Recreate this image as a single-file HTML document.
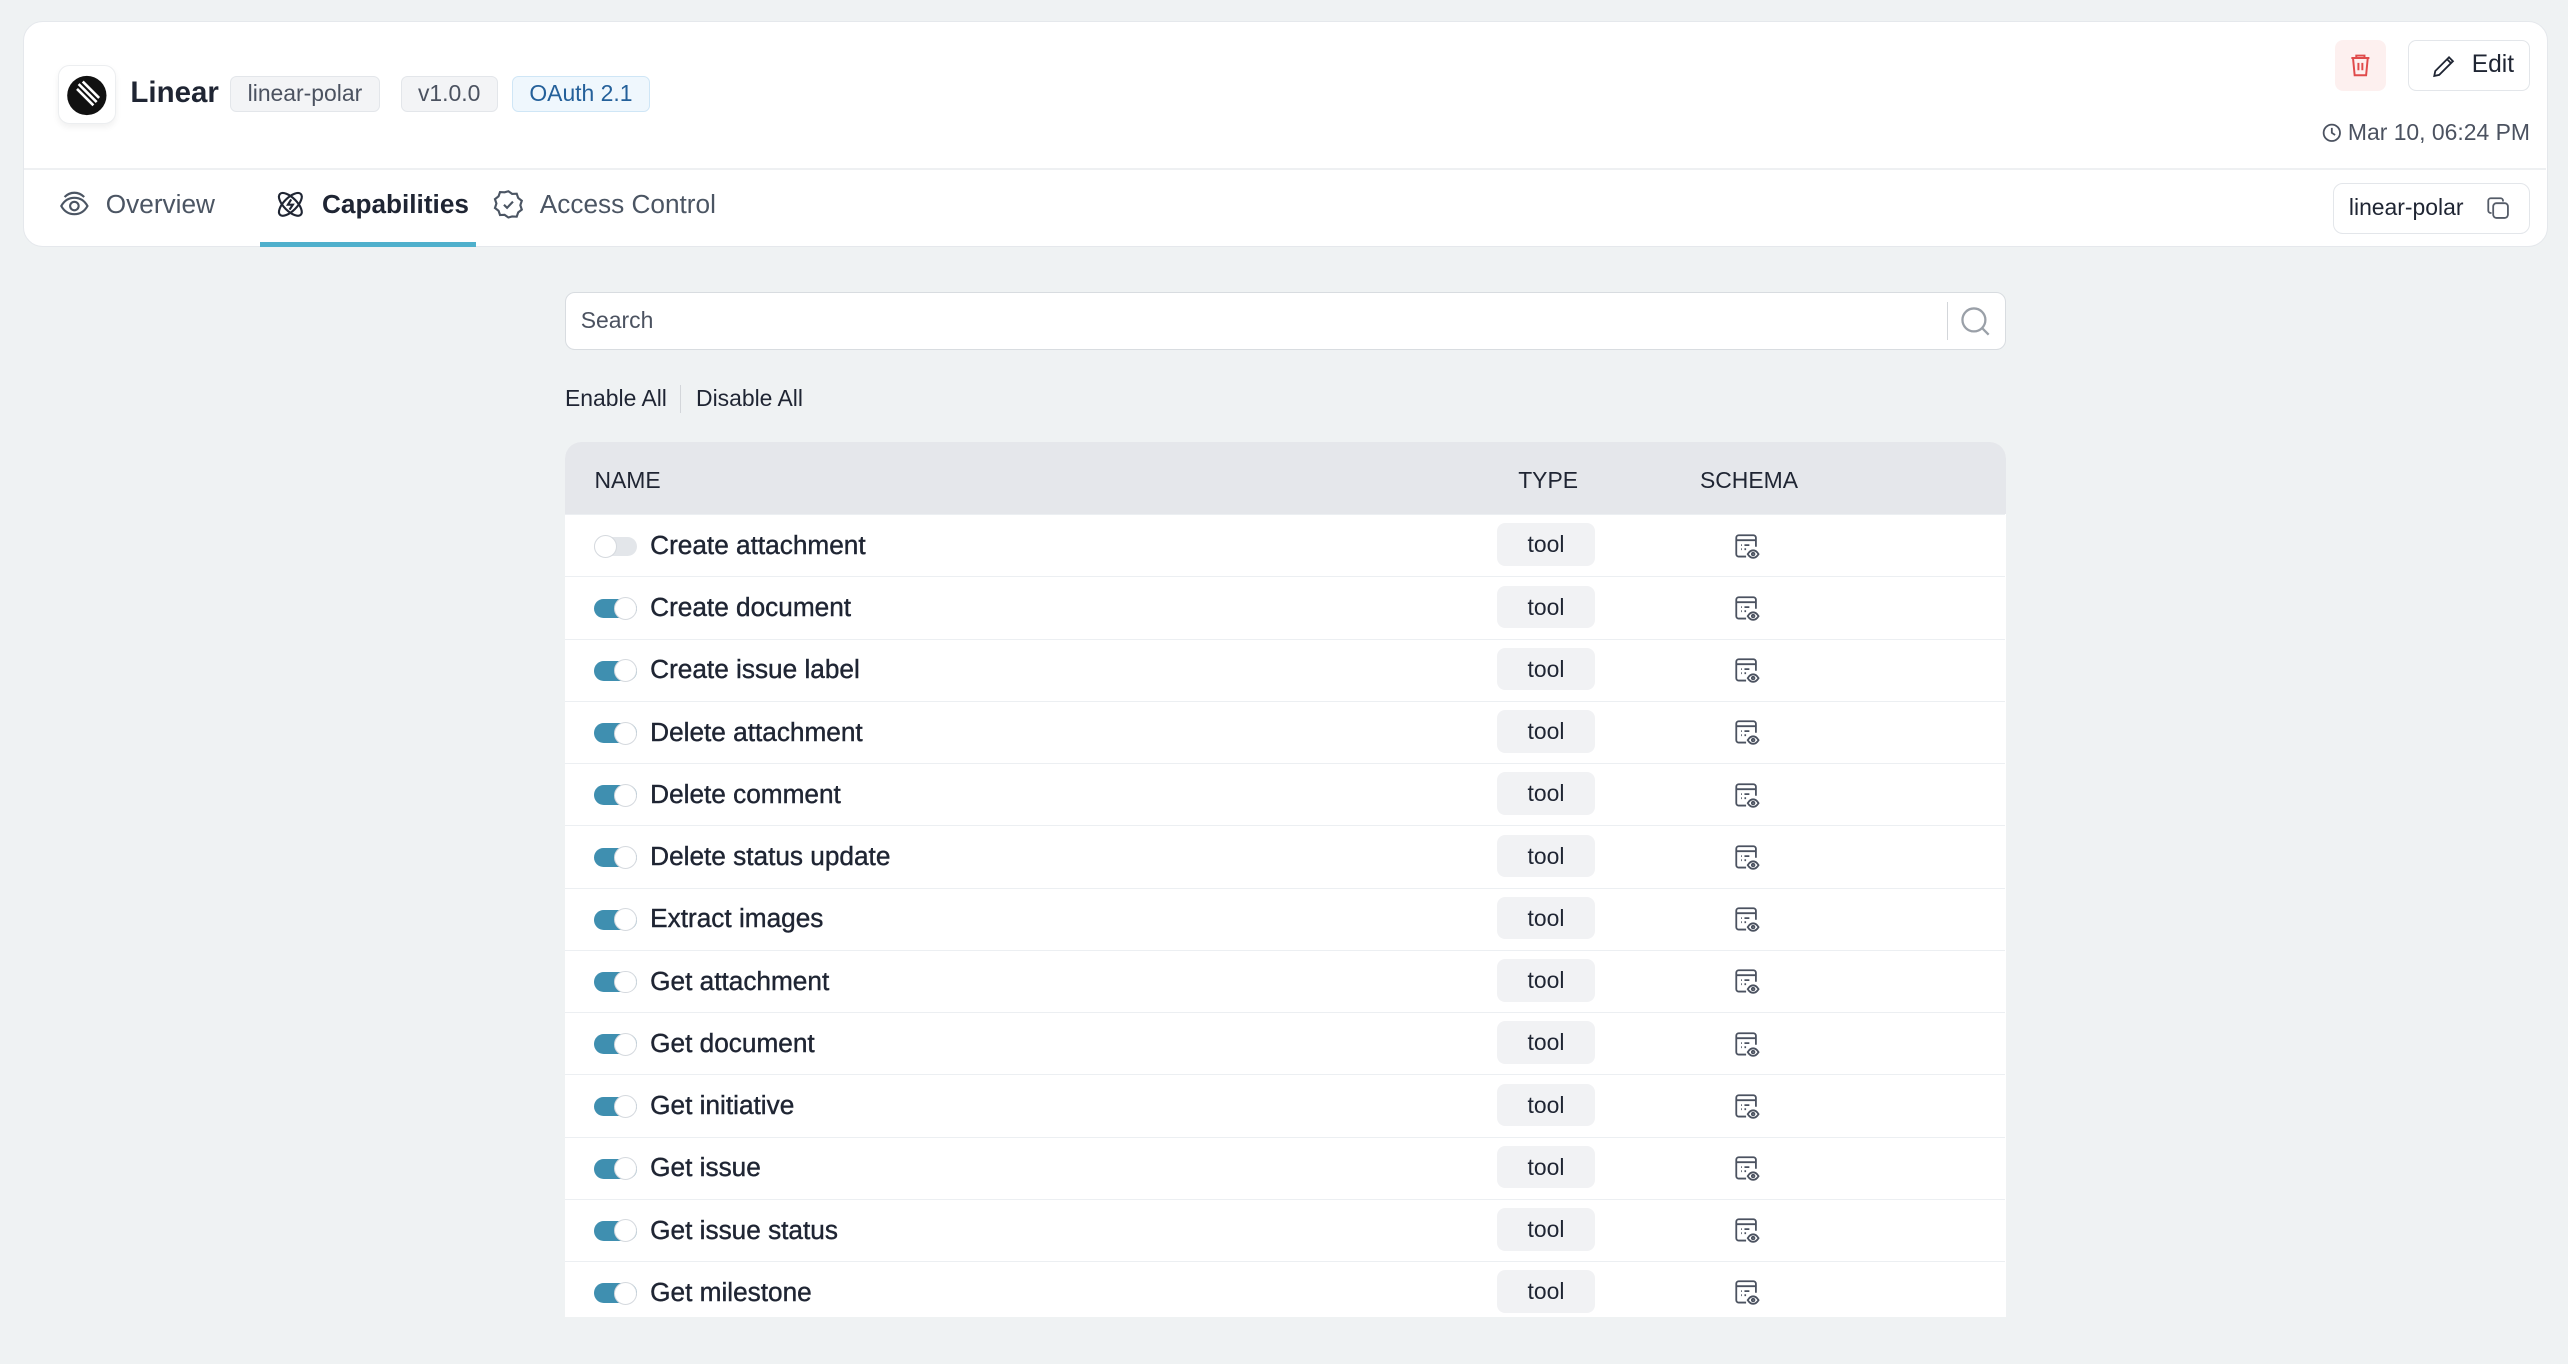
<!DOCTYPE html>
<html><head><meta charset="utf-8"><style>
*{box-sizing:border-box;margin:0;padding:0}
html,body{width:2568px;height:1364px;overflow:hidden;background:#eff2f3}
#w{zoom:1.637755;width:1568px;height:833px;position:relative;font-family:"Liberation Sans",sans-serif;color:#1f2533}
.card{position:absolute;left:14px;top:13px;width:1542px;height:138px;background:#fff;border:1px solid #e5e8ec;border-radius:12px}
.abs{position:absolute}
.badge{position:absolute;top:33px;height:22px;border:1px solid #e3e6ea;background:#f3f4f6;border-radius:4px;font-size:14px;color:#4b5260;line-height:20px;padding:0 10px}
.tab{position:absolute;top:101px;font-size:16px;color:#4b5563;display:flex;align-items:center;gap:9px}
.row{position:absolute;left:0;width:879px;height:38px;border-top:1px solid #eceff2;background:#fff}
.tg{position:absolute;left:18px;top:13px;width:26px;height:12px;border-radius:6px;background:#3f8fb0}
.tg::after{content:"";position:absolute;right:0;top:-1px;width:14px;height:14px;border-radius:50%;background:#fff;border:1px solid #d5d9de;box-sizing:border-box}
.tg.off{background:#e3e6ea}.tg.off::after{left:0;right:auto}
.nm{position:absolute;left:52px;top:9px;font-size:16px;color:#1f2533;-webkit-text-stroke:.25px #1f2533}
.tool{position:absolute;left:569px;top:5px;width:60px;height:26px;border-radius:5px;background:#f1f2f4;font-size:14px;text-align:center;line-height:26px;color:#1f2533}
.sc{position:absolute;left:713px;top:10px}
</style></head><body><div id="w">
<div class="card">
  <div class="abs" style="left:21px;top:26px;width:35px;height:36px;border:1px solid #eceef0;border-radius:7px;background:#fff;box-shadow:0 2px 4px rgba(0,0,0,.06)">
    <svg width="35" height="36" viewBox="0 0 35 36"><circle cx="17" cy="18" r="12" fill="#111"/><g stroke="#fff" stroke-width="1.6"><line x1="11" y1="14" x2="21" y2="24"/><line x1="12" y1="11" x2="23" y2="22"/><line x1="14.5" y1="9.5" x2="24.5" y2="19.5"/></g></svg>
  </div>
  <div class="abs" style="left:65px;top:33px;font-size:18px;font-weight:700;color:#1f2533">Linear</div>
  <div class="badge" style="left:126px">linear-polar</div>
  <div class="badge" style="left:230px">v1.0.0</div>
  <div class="badge" style="left:298px;background:#eff7fd;border-color:#cfe6f6;color:#24609a">OAuth 2.1</div>
  <div class="abs" style="left:1411px;top:11px;width:31px;height:31px;border-radius:5px;background:#fdf0ef">
    <svg width="31" height="31" viewBox="0 0 31 31" fill="none" stroke="#e04b4b" stroke-width="1.2"><path d="M10 11h11M13 11V9.5h5V11M11 11l1 10.5h7l1-10.5M14.3 14v4.5M16.7 14v4.5"/></svg>
  </div>
  <div class="abs" style="left:1456px;top:11px;width:74px;height:31px;border:1px solid #e3e6ea;border-radius:5px;font-size:15px;font-weight:500;line-height:29px;padding-left:38px;color:#1f2533">Edit
    <svg class="abs" style="left:13px;top:7px" width="16" height="16" viewBox="0 0 16 16" fill="none" stroke="#1f2533" stroke-width="1.1"><path d="M2 14l.6-3L11 2.6l2.4 2.4L5 13.4z M9.8 3.8l2.4 2.4"/></svg>
  </div>
  <div class="abs" style="left:1403px;top:59px;font-size:14px;color:#4b5260;display:flex;align-items:center;gap:4px">
    <svg width="12" height="12" viewBox="0 0 12 12" fill="none" stroke="#4b5260" stroke-width="1.1"><circle cx="6" cy="6" r="5"/><path d="M6 3v3l2 1.3"/></svg>Mar 10, 06:24 PM</div>
  <div class="abs" style="left:0;top:89px;width:1540px;height:1px;background:#eef0f2"></div>
  <div class="tab" style="left:21px"><svg width="20" height="20" viewBox="0 0 20 20" fill="none" stroke="#4b5563" stroke-width="1.3"><path d="M2 11c2-3.6 5-5 8-5s6 1.4 8 5c-2 3.6-5 5-8 5s-6-1.4-8-5z"/><circle cx="10" cy="11" r="2.6"/><path d="M4 5.5c2-2 4-2.6 6-2.6s4 .6 6 2.6"/></svg>Overview</div>
  <div class="tab" style="left:153px;color:#1f2533;font-weight:600"><svg width="20" height="20" viewBox="0 0 20 20" fill="none" stroke="#1f2533" stroke-width="1.3"><ellipse cx="10" cy="10" rx="4" ry="9" transform="rotate(45 10 10)"/><ellipse cx="10" cy="10" rx="4" ry="9" transform="rotate(-45 10 10)"/><path d="M10.5 7l-2 3.2h3l-2 3"/></svg>Capabilities</div>
  <div class="tab" style="left:286px"><svg width="20" height="20" viewBox="0 0 20 20" fill="none" stroke="#4b5563" stroke-width="1.3"><path d="M10 2l2.3 1.6 2.8-.1.9 2.6 2.2 1.7-.9 2.7.9 2.7-2.2 1.7-.9 2.6-2.8-.1L10 18l-2.3-1.6-2.8.1-.9-2.6-2.2-1.7.9-2.7-.9-2.7L4 5.1l.9-2.6 2.8.1z"/><path d="M7.3 10.2l1.9 1.9 3.6-3.8"/></svg>Access Control</div>
  <div class="abs" style="left:144px;top:134px;width:132px;height:3px;background:#4fb0cc"></div>
  <div class="abs" style="left:1410px;top:98px;width:120px;height:31px;border:1px solid #e3e6ea;border-radius:6px;font-size:14px;line-height:29px;padding-left:9px;color:#1f2533">linear-polar
    <svg class="abs" style="left:92px;top:7px" width="16" height="16" viewBox="0 0 16 16" fill="none" stroke="#555c68" stroke-width="1.1"><rect x="5" y="5" width="9" height="9" rx="2"/><path d="M11 4V3.5A1.5 1.5 0 0 0 9.5 2h-6A1.5 1.5 0 0 0 2 3.5v6A1.5 1.5 0 0 0 3.5 11H4"/></svg></div>
</div>

<div class="abs" style="left:345px;top:178px;width:880px;height:36px;background:#fff;border:1px solid #d8dce0;border-radius:6px">
  <div class="abs" style="left:9px;top:9px;font-size:14px;color:#4b5260">Search</div>
  <div class="abs" style="left:843px;top:6px;width:1px;height:23px;background:#d3d6da"></div>
  <svg class="abs" style="left:851px;top:8px" width="19" height="19" viewBox="0 0 19 19" fill="none" stroke="#9aa0a8" stroke-width="1.4"><circle cx="8.5" cy="8.5" r="7"/><path d="M13.5 13.5l4 4"/></svg>
</div>
<div class="abs" style="left:345px;top:235px;font-size:14px;color:#1f2533">Enable All</div>
<div class="abs" style="left:415px;top:235px;width:1px;height:17px;background:#d3d6da"></div>
<div class="abs" style="left:425px;top:235px;font-size:14px;color:#1f2533">Disable All</div>

<div class="abs" style="left:345px;top:270px;width:880px;height:534px;border-radius:10px 10px 0 0;overflow:hidden;background:#fff">
  <div class="abs" style="left:0;top:0;width:880px;height:44px;background:#e5e7eb;font-size:14px;font-weight:500;color:#1f2533">
    <span class="abs" style="left:18px;top:15px">NAME</span>
    <span class="abs" style="left:582px;top:15px">TYPE</span>
    <span class="abs" style="left:693px;top:15px">SCHEMA</span>
  </div>
  <div id="rows"></div>
</div>
<script>
var n=["Create attachment","Create document","Create issue label","Delete attachment","Delete comment","Delete status update","Extract images","Get attachment","Get document","Get initiative","Get issue","Get issue status","Get milestone"];
var ic='<svg width="17" height="17" viewBox="0 0 17 17" fill="none" stroke="#4b5260" stroke-width="1.1"><path d="M8 15H3.5A1.5 1.5 0 0 1 2 13.5v-10A1.5 1.5 0 0 1 3.5 2h9A1.5 1.5 0 0 1 14 3.5V9M2 5h12M5 8h.5M7 8h3M5 10.5h.5M7 10.5h1"/><path d="M9 13.5c1-1.6 2.3-2.3 3.3-2.3s2.3.7 3.3 2.3c-1 1.6-2.3 2.3-3.3 2.3S10 15.1 9 13.5z"/><circle cx="12.3" cy="13.5" r=".8"/></svg>';
var h='';n.forEach(function(t,i){h+='<div class="row" style="top:'+(44+i*38)+'px"><div class="tg'+(i?'':' off')+'"></div><div class="nm">'+t+'</div><div class="tool">tool</div><div class="sc">'+ic+'</div></div>'});
document.getElementById('rows').innerHTML=h;
</script>
</div></body></html>
